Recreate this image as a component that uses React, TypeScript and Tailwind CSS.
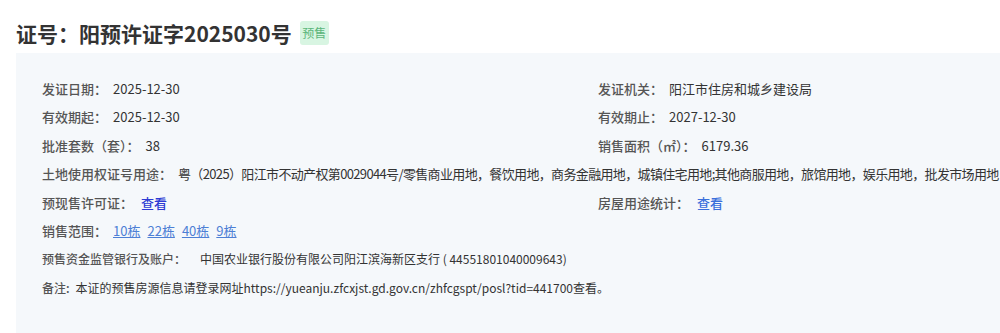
import React from "react"

const font = { fontFamily: '"Noto Sans CJK SC", "Noto Sans", sans-serif' }

function Item({ label, children }: { label: string; children: React.ReactNode }) {
  return (
    <div className="flex h-[28.5px] items-center whitespace-nowrap text-[13px]">
      <span className="font-medium text-[#555]">{label}</span>
      <span className="ml-[6px] text-[#333]">{children}</span>
    </div>
  )
}

export default function App() {
  const ranges = ["10栋", "22栋", "40栋", "9栋"]
  return (
    <div className="h-[333px] w-[1000px] overflow-hidden bg-white" style={font}>
      <div className="flex items-center gap-[8px] pl-[16px] pt-[21px]">
        <h1 className="text-[21px] font-bold leading-[24px] text-[#333]">证号：阳预许证字2025030号</h1>
        <span className="flex h-[24px] w-[29px] items-center justify-center rounded-[3px] bg-[#d8f5e2] text-[12px] text-[#5bb57a]">
          预售
        </span>
      </div>
      <div className="ml-[16px] mt-[8px] h-[400px] bg-[#f5f8fb] pl-[26px] pt-[21px]">
        <div className="grid grid-cols-[556px_1fr]">
          <Item label="发证日期：">2025-12-30</Item>
          <Item label="发证机关：">阳江市住房和城乡建设局</Item>
          <Item label="有效期起：">2025-12-30</Item>
          <Item label="有效期止：">2027-12-30</Item>
          <Item label="批准套数（套）：">38</Item>
          <Item label="销售面积（㎡）：">6179.36</Item>
          <div className="col-span-2">
            <Item label="土地使用权证号用途：">
              <span className="tracking-[-0.65px]">
                粤（2025）阳江市不动产权第0029044号/零售商业用地，餐饮用地，商务金融用地，城镇住宅用地;其他商服用地，旅馆用地，娱乐用地，批发市场用地
              </span>
            </Item>
          </div>
          <Item label="预现售许可证：">
            <a className="ml-[2px] font-medium text-[#2d3bd4]">查看</a>
          </Item>
          <Item label="房屋用途统计：">
            <a className="ml-[2px] font-medium text-[#3a6fdb]">查看</a>
          </Item>
          <div className="col-span-2">
            <Item label="销售范围：">
              <span className="flex gap-[7px]">
                {ranges.map((r) => (
                  <a key={r} className="text-[#4d7fd5] underline">
                    {r}
                  </a>
                ))}
              </span>
            </Item>
          </div>
          <div className="col-span-2 flex h-[28.5px] items-center whitespace-nowrap text-[12px]">
            <span className="font-medium text-[#555]">预售资金监管银行及账户：</span>
            <span className="ml-[14px] text-[#333]">中国农业银行股份有限公司阳江滨海新区支行 ( 44551801040009643)</span>
          </div>
          <div className="col-span-2 flex h-[28.5px] items-center whitespace-nowrap text-[12px]">
            <span className="font-medium text-[#555]">备注:</span>
            <span className="ml-[6px] text-[#333]">
              本证的预售房源信息请登录网址https://yueanju.zfcxjst.gd.gov.cn/zhfcgspt/posl?tid=441700查看。
            </span>
          </div>
        </div>
      </div>
    </div>
  )
}
